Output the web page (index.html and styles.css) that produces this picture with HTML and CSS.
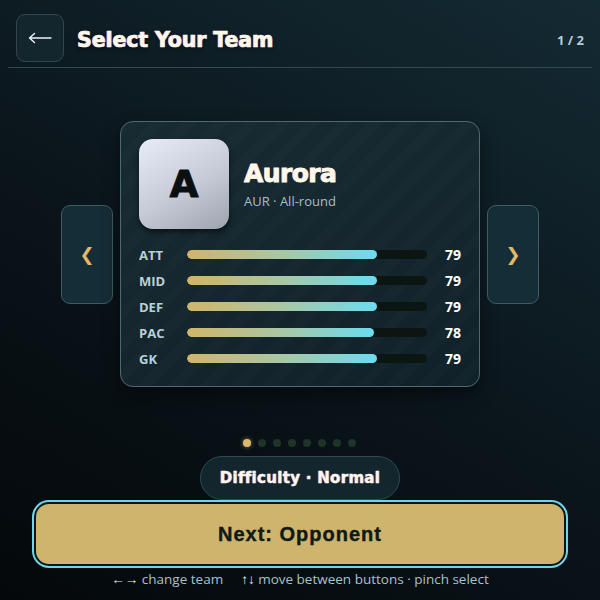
FILE: index.html
```html
<!DOCTYPE html>
<html>
<head>
<meta charset="utf-8">
<link rel="stylesheet" href="styles.css">
</head>
<body>
<div class="app">
  <header class="topbar">
    <button class="back" aria-label="Back"><svg class="back-ico" width="24" height="12" viewBox="0 0 24 12"><path d="M1.5 6 H23 M6.5 1.5 L1.5 6 L6.5 10.5" fill="none" stroke="#eef4f6" stroke-width="1.4" stroke-linecap="round" stroke-linejoin="round"/></svg></button>
    <h1 class="title">Select Your Team</h1>
    <span class="pager">1 / 2</span>
  </header>

  <main class="stage">
    <button class="nav">❮</button>
    <section class="card">
      <div class="head">
        <div class="avatar">A</div>
        <div class="ident">
          <div class="name">Aurora</div>
          <div class="sub">AUR · All-round</div>
        </div>
      </div>
      <div class="stats">
        <div class="row"><span class="lab">ATT</span><span class="track"><span class="fill" style="width:79%"></span></span><span class="val">79</span></div>
        <div class="row"><span class="lab">MID</span><span class="track"><span class="fill" style="width:79%"></span></span><span class="val">79</span></div>
        <div class="row"><span class="lab">DEF</span><span class="track"><span class="fill" style="width:79%"></span></span><span class="val">79</span></div>
        <div class="row"><span class="lab">PAC</span><span class="track"><span class="fill" style="width:78%"></span></span><span class="val">78</span></div>
        <div class="row"><span class="lab">GK</span><span class="track"><span class="fill" style="width:79%"></span></span><span class="val">79</span></div>
      </div>
    </section>
    <button class="nav">❯</button>
  </main>

  <div class="dots">
    <span class="dot on"></span><span class="dot"></span><span class="dot"></span><span class="dot"></span><span class="dot"></span><span class="dot"></span><span class="dot"></span><span class="dot"></span>
  </div>

  <button class="pill">Difficulty · Normal</button>
  <button class="next">Next: Opponent</button>
  <p class="hint"><span><span class="arr">←→</span> change team</span><span><span class="arr">↑↓</span> move between buttons · pinch select</span></p>
</div>
</body>
</html>
```

FILE: styles.css
```css
html, body {
  margin: 0;
  height: 100%;
}
body {
  background: linear-gradient(30deg, #04080b 0%, #0a141a 45%, #142a33 100%);
  font-family: "Open Sans", "Noto Sans", sans-serif;
  color: #fff;
  overflow: hidden;
}
.app {
  width: 600px;
  height: 600px;
  display: flex;
  flex-direction: column;
  align-items: center;
}
button {
  font-family: inherit;
  cursor: pointer;
}
.topbar {
  box-sizing: border-box;
  width: 584px;
  height: 68px;
  margin: 0 8px;
  display: flex;
  align-items: center;
  padding: 8px 8px 0 8px;
  gap: 13px;
  border-bottom: 1px solid #34484f;
  flex: none;
}
.back {
  width: 48px;
  height: 48px;
  border-radius: 9px;
  background: #13262e;
  border: 1px solid #2e474f;
  padding: 0;
  display: flex;
  align-items: center;
  justify-content: center;
}
.back-ico {
  display: block;
  margin-top: 1px;
}
.title {
  margin: 4px 0 0;
  font-family: "DejaVu Sans", sans-serif;
  font-weight: 700;
  font-size: 20.5px;
  letter-spacing: -0.1px;
  color: #fbf8ea;
  -webkit-text-stroke: 0.7px #fbf8ea;
  text-shadow: -1px 0 0 rgba(230, 60, 60, 0.55), 1px 0 0 rgba(60, 90, 230, 0.6), 0 2px 4px rgba(0,0,0,0.5);
  flex: 1;
}
.pager {
  margin-top: 4px;
  font-weight: 700;
  font-size: 13px;
  color: #b9ccd1;
}
.stage {
  margin-top: 53px;
  display: flex;
  align-items: center;
  gap: 7px;
}
.nav {
  width: 52px;
  height: 99px;
  border-radius: 9px;
  background: #152d36;
  border: 1px solid #3f5c64;
  color: #e4b866;
  font-size: 18px;
  font-family: "DejaVu Sans", sans-serif;
  padding: 0;
}
.card {
  box-sizing: border-box;
  width: 360px;
  height: 266px;
  border-radius: 13px;
  border: 1px solid #4d6a72;
  background:
    repeating-linear-gradient(135deg, rgba(255,255,255,0.01) 0 10px, rgba(255,255,255,0) 10px 22px),
    linear-gradient(160deg, #172b33 0%, #14252d 60%, #11212a 100%);
  box-shadow: 0 8px 18px rgba(0,0,0,0.45);
  padding: 17px 18px 0 18px;
}
.head {
  display: flex;
  align-items: flex-start;
  gap: 15px;
}
.avatar {
  width: 90px;
  height: 90px;
  flex: none;
  border-radius: 14px;
  background: linear-gradient(150deg, #e8ecf8 0%, #c5cad6 55%, #9ea4ae 100%);
  box-shadow: 0 3px 5px rgba(0,0,0,0.55);
  display: flex;
  align-items: center;
  justify-content: center;
  color: #0a0f12;
  font-family: "DejaVu Sans", sans-serif;
  font-weight: 700;
  font-size: 37px;
  -webkit-text-stroke: 1px #0a0f12;
  text-shadow: -1px 0 0 rgba(60,80,200,0.4), 1px 0 0 rgba(200,120,40,0.45);
}
.ident {
  padding-top: 20px;
}
.name {
  font-family: "DejaVu Sans", sans-serif;
  font-weight: 700;
  font-size: 25px;
  line-height: 30px;
  letter-spacing: -0.6px;
  color: #fcf9e8;
  -webkit-text-stroke: 0.8px #fcf9e8;
  text-shadow: -1px 0 0 rgba(230, 60, 60, 0.5), 1px 0 0 rgba(60, 90, 230, 0.55);
}
.sub {
  margin-top: 3px;
  font-size: 13px;
  color: #a7bec6;
}
.stats {
  margin-top: 17px;
  display: flex;
  flex-direction: column;
  gap: 9px;
}
.row {
  display: flex;
  align-items: center;
  height: 17px;
}
.lab {
  width: 48px;
  font-weight: 700;
  font-size: 13px;
  color: #b9d0d6;
}
.track {
  width: 240px;
  height: 9px;
  border-radius: 5px;
  background: #0b1612;
  display: block;
  overflow: hidden;
}
.fill {
  display: block;
  height: 100%;
  border-radius: 5px;
  background: linear-gradient(90deg, #d2b46a 0%, #a9c7a3 50%, #6bdcf2 100%);
}
.val {
  width: 34px;
  text-align: right;
  font-weight: 700;
  font-size: 14px;
  color: #fff;
}
.dots {
  margin-top: 52px;
  display: flex;
  gap: 7px;
  margin-left: -1px;
}
.dot {
  width: 8px;
  height: 8px;
  border-radius: 50%;
  background: #1f3428;
}
.dot.on {
  background: #dcb86e;
  box-shadow: 0 0 4px rgba(220,184,110,0.6);
}
.pill {
  margin-top: 9px;
  width: 200px;
  height: 44px;
  border-radius: 22px;
  background: #13252d;
  border: 1px solid #2e4951;
  color: #fbf8ea;
  font-family: "DejaVu Sans", sans-serif;
  font-weight: 700;
  font-size: 15px;
  letter-spacing: 0.3px;
  padding: 0;
  -webkit-text-stroke: 0.4px #fbf8ea;
  text-shadow: -1px 0 0 rgba(230, 60, 60, 0.5), 1px 0 0 rgba(60, 90, 230, 0.55);
}
.next {
  margin-top: 2px;
  width: 532px;
  height: 64px;
  border-radius: 15px;
  background: #cfb46d;
  border: 2px solid #0c1417;
  box-shadow: 0 0 0 2px #6ed6ea;
  color: #0e1a17;
  font-family: "Liberation Sans", sans-serif;
  font-weight: 700;
  font-size: 20px;
  letter-spacing: 1px;
  -webkit-text-stroke: 0.4px #0e1a17;
}
.hint {
  margin: 4px 0 0;
  font-size: 13.5px;
  color: #a8c2ca;
  display: flex;
  gap: 18px;
}
.arr {
  color: #e8eef0;
}
```
